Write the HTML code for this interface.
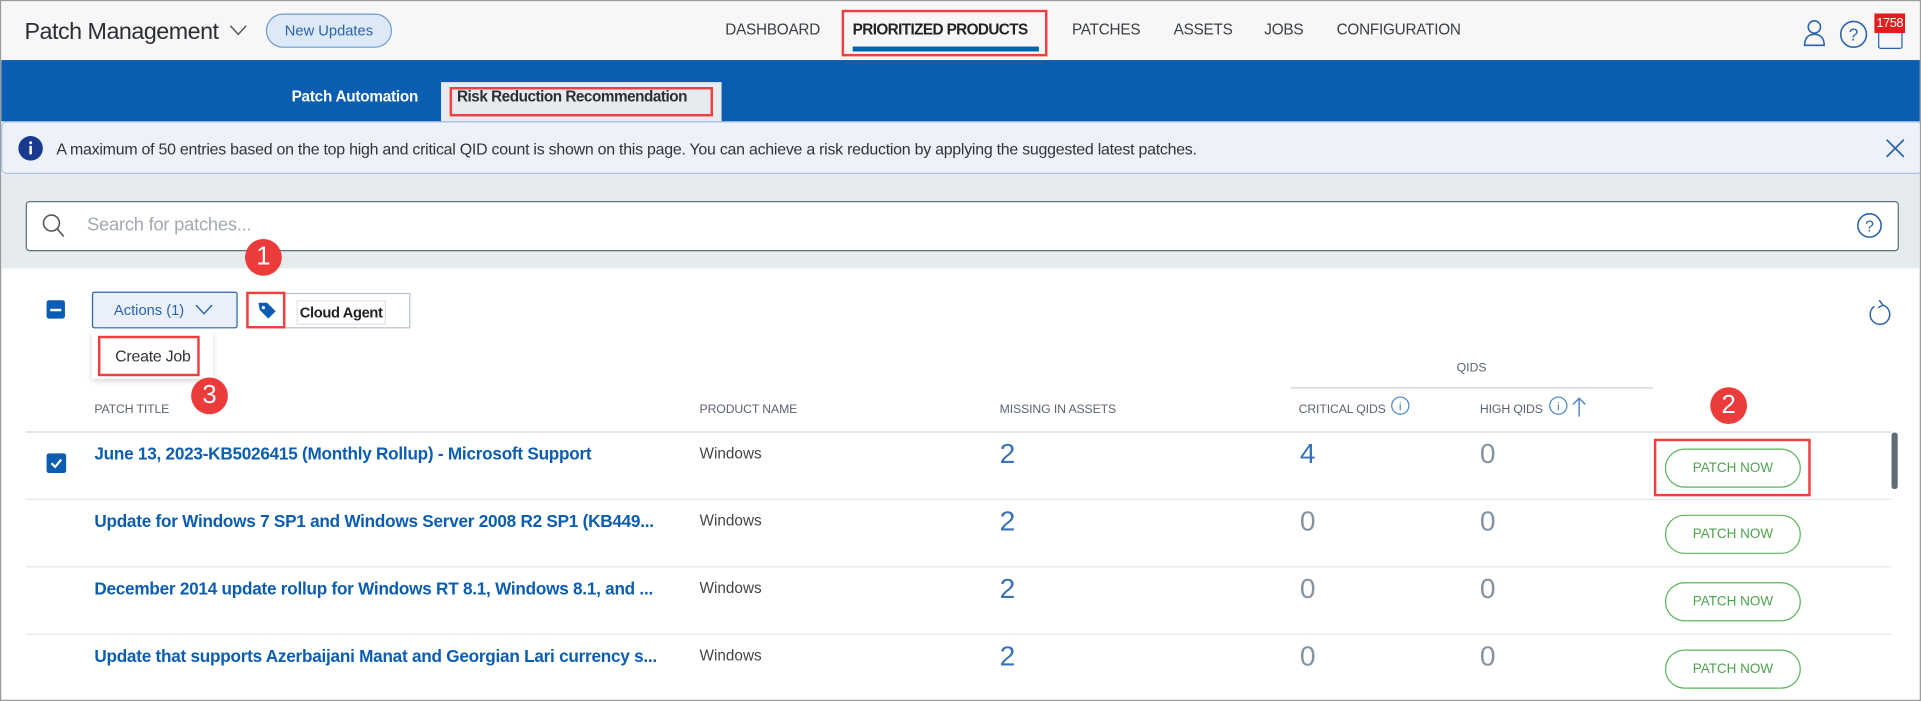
<!DOCTYPE html>
<html><head><meta charset="utf-8"><style>
*{box-sizing:border-box;margin:0;padding:0}
html,body{width:1921px;height:701px;overflow:hidden;background:#fff}
#w{position:absolute;left:0;top:0;width:1568px;height:572px;transform:scale(1.2251,1.2255);transform-origin:0 0;font-family:"Liberation Sans",sans-serif;color:#333;border:1px solid #9a9a9a;background:#fff;overflow:hidden}
.a{position:absolute;white-space:nowrap}
.rb{position:absolute;border:2px solid #ef3f3f}
.rc{position:absolute;width:30px;height:30px;border-radius:50%;background:#ec3b3b;color:#fff;font-size:21px;text-align:center;line-height:30px}
.nav{font-size:12.5px;color:#3a3f45;top:16px;letter-spacing:-0.2px}
.hd{font-size:10px;color:#5a6470;top:328px;letter-spacing:-0.1px}
.tt{font-size:14px;font-weight:bold;color:#0b5db2;left:76px;letter-spacing:-0.2px}
.pn{font-size:12.5px;color:#444;left:570px}
.n{font-size:23px;color:#3a72b8}
.z{color:#8494a2}
.btn{position:absolute;left:1358px;width:111px;height:32px;border:1px solid #5bb55b;border-radius:16px;color:#4ea34e;font-size:11px;text-align:center;line-height:30px}
.ln{position:absolute;left:20px;width:1523px;height:1px;background:#e2e6ea}
</style></head><body><div id="w">
<div class="a" style="left:0;top:0;width:1568px;height:48px;background:#f7f7f7"></div>
<div class="a" style="left:19px;top:15px;font-size:19px;color:#2b2f33;letter-spacing:-0.4px">Patch Management</div>
<svg class="a" style="left:186px;top:19px" width="15" height="10"><path d="M1 1l6.5 7L14 1" fill="none" stroke="#555" stroke-width="1.2"/></svg>
<div class="a" style="left:216px;top:10px;width:103px;height:28px;border:1px solid #6c9ad0;border-radius:14px;background:#dde9f6;color:#2a64b0;font-size:12px;text-align:center;line-height:26px">New Updates</div>
<div class="a nav" style="left:591px">DASHBOARD</div>
<div class="a nav" style="left:695px;font-weight:bold;color:#222;letter-spacing:-0.5px">PRIORITIZED PRODUCTS</div>
<div class="a" style="left:695px;top:37px;width:152px;height:4px;background:#0b5db2"></div>
<div class="rb" style="left:686px;top:7px;width:168px;height:38px"></div>
<div class="a nav" style="left:874px">PATCHES</div>
<div class="a nav" style="left:957px">ASSETS</div>
<div class="a nav" style="left:1031px">JOBS</div>
<div class="a nav" style="left:1090px">CONFIGURATION</div>
<svg class="a" style="left:1470px;top:14px" width="20" height="24"><circle cx="10" cy="7" r="5" fill="none" stroke="#2a64b0" stroke-width="1.3"/><path d="M2 22c0-6 3-9 8-9s8 3 8 9z" fill="none" stroke="#2a64b0" stroke-width="1.3"/></svg>
<svg class="a" style="left:1500px;top:15px" width="24" height="24"><circle cx="12" cy="12" r="10.5" fill="none" stroke="#2a64b0" stroke-width="1.3"/><text x="12" y="17" font-size="14" text-anchor="middle" fill="#2a64b0" font-family="Liberation Sans">?</text></svg>
<div class="a" style="left:1532px;top:21px;width:20px;height:18px;border:1.3px solid #2a64b0;border-radius:2px"></div>
<div class="a" style="left:1529px;top:10px;width:25px;height:16px;background:#e11d1d;color:#fff;font-size:10.5px;text-align:center;line-height:16px;letter-spacing:-0.4px">1758</div>
<div class="a" style="left:0;top:48px;width:1568px;height:50px;background:#0b5db2"></div>
<div class="a" style="left:237px;top:71px;font-size:12.5px;font-weight:bold;color:#fff;letter-spacing:-0.2px">Patch Automation</div>
<div class="a" style="left:359px;top:66px;width:229px;height:32px;background:#e6ebef"></div>
<div class="a" style="left:372px;top:71px;font-size:12.5px;font-weight:bold;color:#2b2f33;letter-spacing:-0.4px">Risk Reduction Recommendation</div>
<div class="rb" style="left:366px;top:70px;width:215px;height:24px"></div>
<div class="a" style="left:0;top:98px;width:1568px;height:43px;background:#edf2fa;border:1px solid #aac4e6;border-radius:4px"></div>
<svg class="a" style="left:14px;top:110px" width="20" height="20"><circle cx="10" cy="10" r="10" fill="#1a3a8f"/><rect x="9" y="8" width="2" height="7" fill="#fff"/><circle cx="10" cy="5.5" r="1.2" fill="#fff"/></svg>
<div class="a" style="left:45px;top:113px;font-size:13px;color:#333;letter-spacing:-0.2px">A maximum of 50 entries based on the top high and critical QID count is shown on this page. You can achieve a risk reduction by applying the suggested latest patches.</div>
<svg class="a" style="left:1538px;top:112px" width="16" height="16"><path d="M1 1l14 14M15 1L1 15" stroke="#2a64b0" stroke-width="1.4"/></svg>
<div class="a" style="left:0;top:141px;width:1568px;height:77px;background:#e6ebee"></div>
<div class="a" style="left:20px;top:163px;width:1529px;height:41px;background:#fff;border:1px solid #5d6f7e;border-radius:3px"></div>
<svg class="a" style="left:33px;top:173px" width="20" height="20"><circle cx="8" cy="8" r="6.5" fill="none" stroke="#555" stroke-width="1.3"/><path d="M12.5 12.5L18 19" stroke="#555" stroke-width="1.3"/></svg>
<div class="a" style="left:70px;top:174px;font-size:15px;color:#a3aab1;letter-spacing:-0.2px">Search for patches...</div>
<svg class="a" style="left:1514px;top:172px" width="22" height="22"><circle cx="11" cy="11" r="9.5" fill="none" stroke="#2a64b0" stroke-width="1.3"/><text x="11" y="16" font-size="13" text-anchor="middle" fill="#2a64b0" font-family="Liberation Sans">?</text></svg>
<div class="rc" style="left:199px;top:194px">1</div>
<div class="a" style="left:37px;top:244px;width:15px;height:15px;background:#0b5db2;border-radius:2px"></div>
<div class="a" style="left:40px;top:251px;width:9px;height:2px;background:#fff"></div>
<div class="a" style="left:74px;top:237px;width:119px;height:30px;background:#e9f0f9;border:1px solid #2a64b0;border-radius:2px"></div>
<div class="a" style="left:92px;top:245px;font-size:12px;color:#2a64b0">Actions (1)</div>
<svg class="a" style="left:158px;top:247px" width="15" height="10"><path d="M1 1l6.5 7L14 1" fill="none" stroke="#2a64b0" stroke-width="1.2"/></svg>
<div class="a" style="left:200px;top:238px;width:134px;height:29px;border:1px solid #b6c2cc"></div>
<svg class="a" style="left:208px;top:244px" width="18" height="18"><path d="M2 2h7l7 7-6 6-7-7z" fill="#0b5db2"/><circle cx="6" cy="6" r="1.3" fill="#fff"/></svg>
<div class="rb" style="left:200px;top:237px;width:32px;height:30px"></div>
<div class="a" style="left:241px;top:244px;width:73px;height:20px;border:1px solid #e0e4e8;font-size:12px;font-weight:bold;color:#222;text-align:center;line-height:18px;letter-spacing:-0.3px">Cloud Agent</div>
<div class="a" style="left:74px;top:269px;width:99px;height:39px;background:#fff;box-shadow:0 2px 5px rgba(0,0,0,.18)"></div>
<div class="a" style="left:93px;top:282px;font-size:13px;color:#333;letter-spacing:-0.2px">Create Job</div>
<div class="rb" style="left:79px;top:273px;width:83px;height:33px"></div>
<div class="rc" style="left:155px;top:307px">3</div>
<svg class="a" style="left:1522px;top:242px" width="22" height="24"><path d="M14 6a8 8 0 1 1-7 1" fill="none" stroke="#2a64b0" stroke-width="1.2"/><path d="M11 2l3 4-4 2" fill="none" stroke="#2a64b0" stroke-width="1.2"/></svg>
<div class="a" style="left:1188px;top:294px;font-size:10px;color:#5a6470">QIDS</div>
<div class="a" style="left:1052px;top:315px;width:296px;height:1px;background:#c8d0d8"></div>
<div class="a hd" style="left:76px">PATCH TITLE</div>
<div class="a hd" style="left:570px">PRODUCT NAME</div>
<div class="a hd" style="left:815px">MISSING IN ASSETS</div>
<div class="a hd" style="left:1059px">CRITICAL QIDS</div>
<svg class="a" style="left:1134px;top:322px" width="16" height="16"><circle cx="8" cy="8" r="7" fill="none" stroke="#4d86c7" stroke-width="1"/><text x="8" y="12" font-size="10" text-anchor="middle" fill="#4d86c7" font-family="Liberation Sans">i</text></svg>
<div class="a hd" style="left:1207px">HIGH QIDS</div>
<svg class="a" style="left:1263px;top:322px" width="16" height="16"><circle cx="8" cy="8" r="7" fill="none" stroke="#4d86c7" stroke-width="1"/><text x="8" y="12" font-size="10" text-anchor="middle" fill="#4d86c7" font-family="Liberation Sans">i</text></svg>
<svg class="a" style="left:1282px;top:322px" width="12" height="18"><path d="M6 17V2M1 7l5-5 5 5" fill="none" stroke="#4d86c7" stroke-width="1.2"/></svg>
<div class="rc" style="left:1395px;top:315px">2</div>
<div class="a" style="left:20px;top:351px;width:1523px;height:1px;background:#cfd6dc"></div>
<div class="a" style="left:37px;top:369px;width:16px;height:16px;background:#0b5db2;border-radius:2px"></div>
<svg class="a" style="left:39px;top:371px" width="12" height="12"><path d="M2 6l3 3 5-6" fill="none" stroke="#fff" stroke-width="1.8"/></svg>
<div class="a tt" style="top:361px">June 13, 2023-KB5026415 (Monthly Rollup) - Microsoft Support</div>
<div class="a pn" style="top:362px">Windows</div>
<div class="a n" style="left:815px;top:356px">2</div>
<div class="a n" style="left:1060px;top:356px">4</div>
<div class="a n z" style="left:1207px;top:356px">0</div>
<div class="btn" style="top:365px">PATCH NOW</div>
<div class="rb" style="left:1349px;top:357px;width:128px;height:47px"></div>
<div class="a" style="left:1543px;top:352px;width:5px;height:46px;background:#5e6a74;border-radius:2px"></div>
<div class="ln" style="top:406px"></div>
<div class="a tt" style="top:416px">Update for Windows 7 SP1 and Windows Server 2008 R2 SP1 (KB449...</div>
<div class="a pn" style="top:417px">Windows</div>
<div class="a n" style="left:815px;top:411px">2</div>
<div class="a n z" style="left:1060px;top:411px">0</div>
<div class="a n z" style="left:1207px;top:411px">0</div>
<div class="btn" style="top:419px">PATCH NOW</div>
<div class="ln" style="top:461px"></div>
<div class="a tt" style="top:471px">December 2014 update rollup for Windows RT 8.1, Windows 8.1, and ...</div>
<div class="a pn" style="top:472px">Windows</div>
<div class="a n" style="left:815px;top:466px">2</div>
<div class="a n z" style="left:1060px;top:466px">0</div>
<div class="a n z" style="left:1207px;top:466px">0</div>
<div class="btn" style="top:474px">PATCH NOW</div>
<div class="ln" style="top:516px"></div>
<div class="a tt" style="top:526px">Update that supports Azerbaijani Manat and Georgian Lari currency s...</div>
<div class="a pn" style="top:527px">Windows</div>
<div class="a n" style="left:815px;top:521px">2</div>
<div class="a n z" style="left:1060px;top:521px">0</div>
<div class="a n z" style="left:1207px;top:521px">0</div>
<div class="btn" style="top:529px">PATCH NOW</div>
</div></body></html>
